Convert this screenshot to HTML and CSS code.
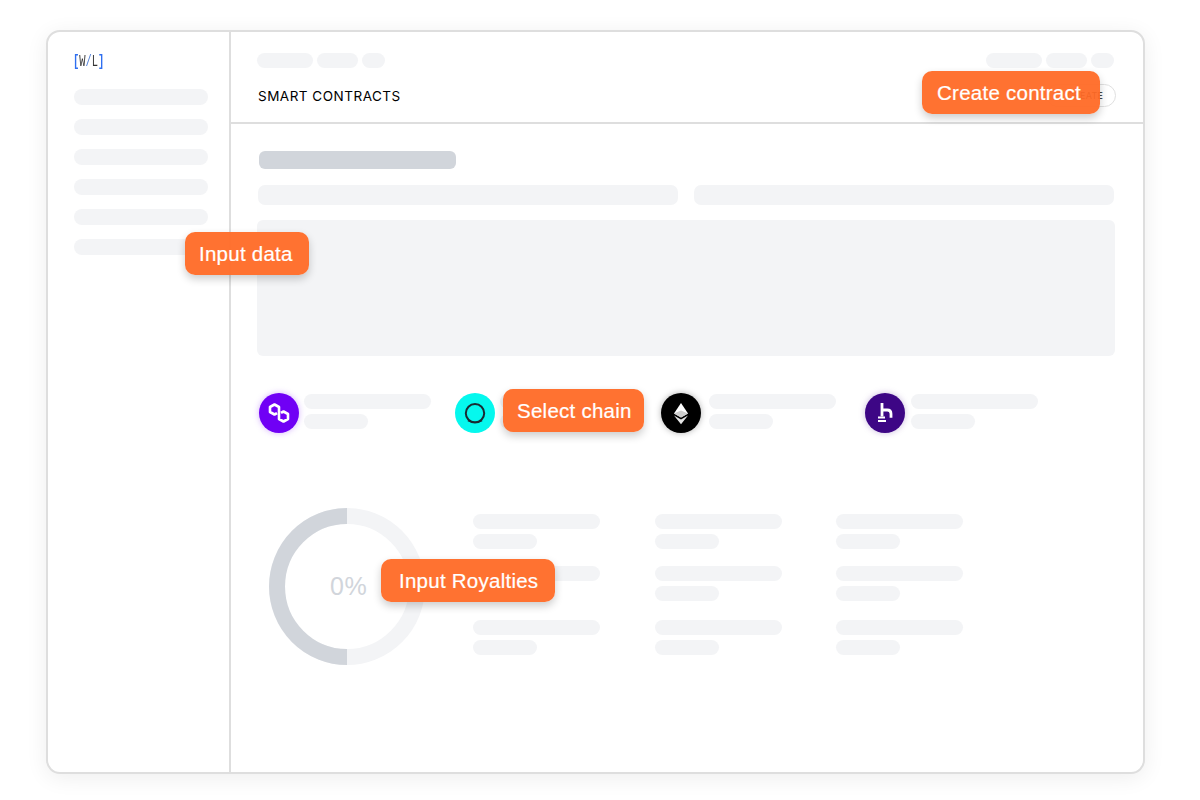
FILE: index.html
```html
<!DOCTYPE html>
<html lang="en">
<head>
<meta charset="utf-8">
<title>Smart contracts</title>
<link rel="stylesheet" href="styles.css">
</head>
<body>
<div class="frame">
  <aside class="sidebar">
    <div class="logo"><span class="logo-text"><b>[</b>W<i>/</i>L<b>]</b></span></div>
    <div class="nav">
      <div class="pill nav-pill"></div>
      <div class="pill nav-pill"></div>
      <div class="pill nav-pill"></div>
      <div class="pill nav-pill"></div>
      <div class="pill nav-pill"></div>
      <div class="pill nav-pill"></div>
    </div>
  </aside>
  <main class="main">
    <header class="header">
      <div class="crumbs">
        <div class="crumb-group">
          <div class="pill crumb w56"></div>
          <div class="pill crumb w41"></div>
          <div class="pill crumb w23"></div>
        </div>
        <div class="crumb-group">
          <div class="pill crumb w56"></div>
          <div class="pill crumb w41"></div>
          <div class="pill crumb w23"></div>
        </div>
      </div>
      <div class="title-row">
        <h1 class="title">SMART CONTRACTS</h1>
        <div class="create-btn">CREATE</div>
      </div>
    </header>
    <section class="content">
      <div class="heading-bar"></div>
      <div class="inputs">
        <div class="input"></div>
        <div class="input"></div>
      </div>
      <div class="textarea"></div>
      <div class="chains">
        <div class="chain chain-a">
          <svg class="chain-icon icon-glow-purple" viewBox="0 0 40 40">
            <circle cx="20" cy="20" r="20" fill="#7000f5"/>
            <path d="M20 20v-6l-4.5-2.5L11 14v5l4.5 2.5 2.5-1.4M20 20v6l4.5 2.5L29 26v-5l-4.5-2.5-2.5 1.4" fill="none" stroke="#fff" stroke-width="2.6" stroke-linejoin="round"/>
          </svg>
          <div class="chain-lines"><div class="pill line-long"></div><div class="pill line-short"></div></div>
        </div>
        <div class="chain chain-b">
          <svg class="chain-icon" viewBox="0 0 40 40">
            <circle cx="20" cy="20" r="20" fill="#05f8ee"/>
            <circle cx="20" cy="20.3" r="9.2" fill="none" stroke="#1a2a33" stroke-width="2"/>
            <path d="M13 27.6C16.5 29.8 23.5 29.8 27 27.6" fill="none" stroke="#1a2a33" stroke-width="1.6"/>
          </svg>
          <div class="chain-lines"><div class="pill line-long"></div><div class="pill line-short"></div></div>
        </div>
        <div class="chain chain-c">
          <svg class="chain-icon icon-glow-dark" viewBox="0 0 40 40">
            <circle cx="20" cy="20" r="20" fill="#000"/>
            <path d="M20 10l-7 10.6 7 4 7-4z" fill="#fff"/>
            <path d="M13 22.6l7 8.6 7-8.6-7 4z" fill="#e4e4e4"/>
            <path d="M20 17.5l-7 3.1 7 4 7-4z" fill="#cdcdcd"/>
          </svg>
          <div class="chain-lines"><div class="pill line-long"></div><div class="pill line-short"></div></div>
        </div>
        <div class="chain chain-d">
          <svg class="chain-icon icon-glow-indigo" viewBox="0 0 40 40">
            <circle cx="20" cy="20" r="20" fill="#3d0685"/>
            <path d="M17 10v13.5M17 17h5.2Q26 17 26 20.8v4" fill="none" stroke="#fff" stroke-width="2.8"/>
            <path d="M13 24.5h7M13 28h8" fill="none" stroke="#fff" stroke-width="1.8"/>
          </svg>
          <div class="chain-lines"><div class="pill line-long"></div><div class="pill line-short"></div></div>
        </div>
      </div>
      <div class="lower">
        <div class="gauge">
          <svg class="gauge-ring" viewBox="0 0 156 157">
            <ellipse cx="78" cy="78.5" rx="70" ry="70.5" fill="none" stroke="#f3f4f6" stroke-width="16"/>
            <path d="M78 8A70 70.5 0 0 0 78 149" fill="none" stroke="#d1d5db" stroke-width="16"/>
          </svg>
          <span class="gauge-value">0%</span>
        </div>
        <div class="stats">
          <div class="stat"><div class="pill line-long"></div><div class="pill line-short"></div></div>
          <div class="stat"><div class="pill line-long"></div><div class="pill line-short"></div></div>
          <div class="stat"><div class="pill line-long"></div><div class="pill line-short"></div></div>
          <div class="stat"><div class="pill line-long"></div><div class="pill line-short"></div></div>
          <div class="stat"><div class="pill line-long"></div><div class="pill line-short"></div></div>
          <div class="stat"><div class="pill line-long"></div><div class="pill line-short"></div></div>
          <div class="stat"><div class="pill line-long"></div><div class="pill line-short"></div></div>
          <div class="stat"><div class="pill line-long"></div><div class="pill line-short"></div></div>
          <div class="stat"><div class="pill line-long"></div><div class="pill line-short"></div></div>
        </div>
      </div>
    </section>
  </main>
  <div class="tip tip-contract">Create contract</div>
  <div class="tip tip-data">Input data</div>
  <div class="tip tip-chain">Select chain</div>
  <div class="tip tip-royalties">Input Royalties</div>
</div>
</body>
</html>
```
FILE: styles.css
```css
* { box-sizing: border-box; }
html, body { margin: 0; height: 100%; background: #fff; }
body { padding: 30px 55px 26px 46px; overflow: hidden; }

.frame {
  position: relative;
  display: flex;
  width: 1099px;
  height: 744px;
  background: #fff;
  border: 2px solid #dedede;
  border-radius: 14px;
  box-shadow: 0 4px 22px rgba(0, 0, 0, 0.07);
  font-family: "Liberation Sans", Arial, sans-serif;
}

.pill { height: 15px; border-radius: 8px; background: #f3f4f6; }

.sidebar {
  flex: none;
  width: 183px;
  padding: 20px 0 0 26px;
  border-right: 2px solid #dedede;
}
.logo { height: 17px; margin-left: -1px; }
.logo-text {
  display: inline-block;
  font: 16px/17px "Liberation Mono", monospace;
  color: #333;
  white-space: nowrap;
  transform: scaleX(0.65);
  transform-origin: left center;
}
.logo-text b { font-weight: 700; color: #2f6ff0; }
.logo-text i { font-style: normal; color: #4f7fd8; }
.nav { display: flex; flex-direction: column; gap: 14px; margin-top: 20px; }
.nav-pill { width: 134px; height: 16px; }

.main { flex: 1; min-width: 0; display: flex; flex-direction: column; }
.header { height: 92px; padding: 21px 29px 0 26px; border-bottom: 2px solid #dedede; }
.crumbs { display: flex; justify-content: space-between; }
.crumb-group { display: flex; gap: 4px; }
.crumb { height: 15px; }
.w56 { width: 56px; }
.w41 { width: 41px; }
.w23 { width: 23px; }
.title-row { display: flex; justify-content: space-between; align-items: flex-start; margin-top: 16px; margin-right: -2px; }
.title {
  margin: 1px 0 0 1px;
  font: 400 13.5px/23px Inter, sans-serif;
  letter-spacing: 0.5px;
  color: #000;
}
.create-btn {
  width: 70px;
  height: 23px;
  padding-left: 20px;
  border: 1px solid #e0e0e0;
  border-radius: 12px;
  font: 400 9px/21px Inter, sans-serif;
  letter-spacing: 0.3px;
  color: #111;
}

.content { padding: 27px 29px 0 26px; }
.heading-bar { width: 197px; height: 18px; margin-left: 2px; border-radius: 6px; background: #d1d5db; }
.inputs { display: flex; gap: 16px; margin: 16px 0 0 1px; }
.input { flex: 1; height: 20px; border-radius: 7px; background: #f3f4f6; }
.textarea { height: 136px; margin: 15px -1px 0 0; border-radius: 6px; background: #f3f4f6; }

.chains { display: flex; margin: 37px 0 0 2px; }
.chain { display: flex; gap: 5px; }
.chain-a { width: 196px; }
.chain-b { width: 206px; }
.chain-c { width: 204px; gap: 8px; }
.chain-d { gap: 6px; }
.chain-icon { flex: none; width: 40px; height: 40px; }
.icon-glow-purple { filter: drop-shadow(0 0 3px rgba(112, 0, 245, 0.3)); }
.icon-glow-dark { filter: drop-shadow(0 0 3px rgba(0, 0, 0, 0.3)); }
.icon-glow-indigo { filter: drop-shadow(0 0 3px rgba(61, 6, 133, 0.28)); }
.chain-lines { padding-top: 1px; }
.line-long { width: 127px; }
.line-short { width: 64px; margin-top: 5px; }

.lower { display: flex; margin: 75px 0 0 12px; }
.gauge { position: relative; flex: none; width: 156px; height: 157px; }
.gauge-ring { display: block; width: 156px; height: 157px; }
.gauge-value {
  position: absolute;
  left: 61px;
  top: 64px;
  font-size: 25px;
  line-height: 28px;
  letter-spacing: 0.5px;
  color: #d1d5db;
}
.stats {
  display: grid;
  grid-template-columns: 182px 181px 127px;
  grid-template-rows: 52px 54px 35px;
  margin: 6px 0 0 48px;
}

.tip {
  position: absolute;
  height: 43px;
  border-radius: 10px;
  background: rgba(255, 106, 38, 0.95);
  box-shadow: 0 4px 8px rgba(0, 0, 0, 0.2);
  color: #fff;
  font-size: 20.5px;
  line-height: 43px;
  letter-spacing: 0.25px;
  -webkit-text-stroke: 0.2px #fff;
  white-space: nowrap;
}
.tip-contract { left: 874px; top: 39px; width: 178px; padding-left: 15px; }
.tip-data { left: 137px; top: 200px; width: 124px; padding-left: 14px; }
.tip-chain { left: 455px; top: 357px; width: 141px; padding-left: 14px; }
.tip-royalties { left: 333px; top: 527px; width: 174px; padding-left: 18px; }
```
